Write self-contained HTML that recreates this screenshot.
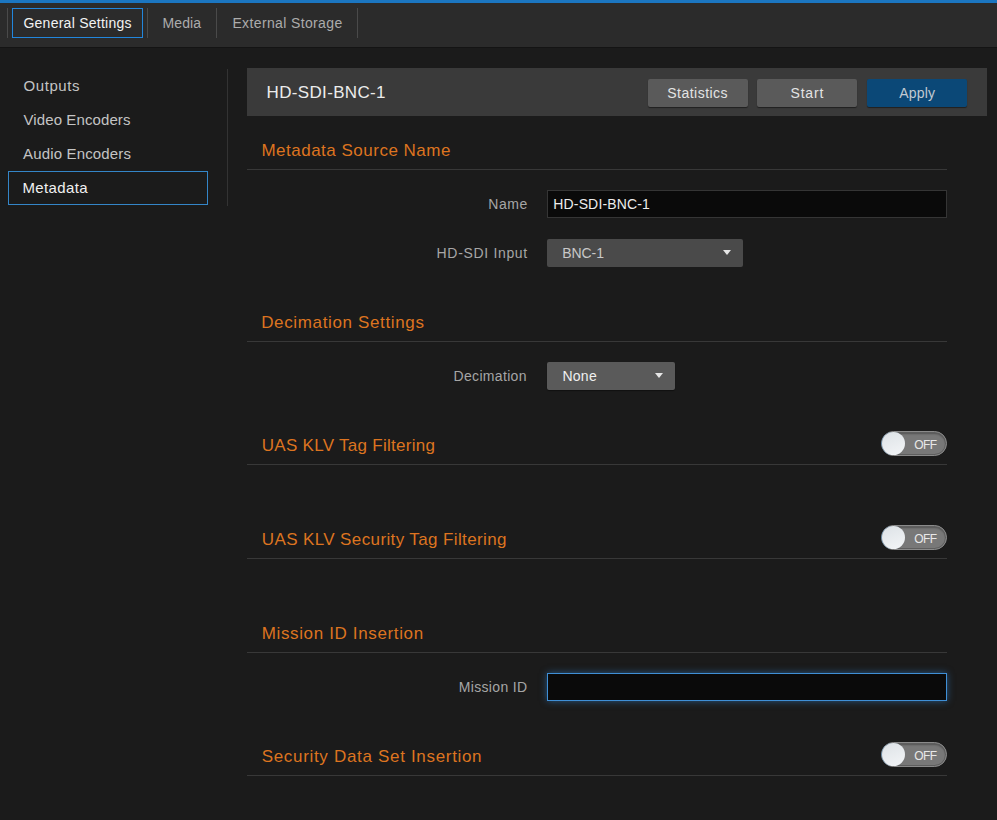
<!DOCTYPE html>
<html><head><meta charset="utf-8">
<style>
*{box-sizing:border-box;margin:0;padding:0}
html,body{width:997px;height:820px;overflow:hidden;background:#1b1b1b;font-family:"Liberation Sans",sans-serif}
.t{position:absolute;white-space:nowrap}
.b{position:absolute}
.vd{position:absolute;width:1px;background:#4a4a4a}
.btn{position:absolute;top:79px;width:100px;height:28px;background:#5a5a5a;border-radius:2px;box-shadow:0 1px 1px rgba(0,0,0,.45)}
.ln{position:absolute;left:247px;width:700px;height:1px;background:#383838}
.inp{position:absolute;left:547px;width:400px;height:28px;background:#0a0a0a;border:1px solid #353535}
.sel{position:absolute;left:547px;height:28px;border-radius:2px}
.caret{position:absolute;width:0;height:0;border-left:4.5px solid transparent;border-right:4.5px solid transparent;border-top:5px solid #e6e6e6}
.tog{position:absolute;left:881px;width:66px;height:25px;border-radius:12.5px;background:#787878;border:1px solid #8a8a8a;box-shadow:inset 0 0 0 1px #5e5e5e,inset 0 2px 2px rgba(0,0,0,.3)}
.knob{position:absolute;left:0px;top:0px;width:23px;height:23px;border-radius:50%;background:linear-gradient(160deg,#dde2e6,#f3f5f7);box-shadow:-0.6px 0 0 0 #5b8fb8}
</style></head><body>
<div class="b" style="left:0;top:0;width:997px;height:3px;background:#1b76c1"></div>
<div class="b" style="left:0;top:3px;width:997px;height:44px;background:#2b2b2b"></div>
<div class="vd" style="left:7px;top:8px;height:30px"></div>
<div class="b" style="left:12px;top:8px;width:131px;height:30px;border:1px solid #2286dc"></div>
<div class="vd" style="left:147px;top:8px;height:30px"></div>
<div class="vd" style="left:216px;top:8px;height:30px"></div>
<div class="vd" style="left:357px;top:8px;height:30px"></div>
<div class="b" style="left:0;top:47px;width:997px;height:1px;background:#141414"></div>

<div class="t" style="left:23.4px;top:16px;font-size:14px;line-height:14px;letter-spacing:0.26px;color:#f2f2f2;">General Settings</div>
<div class="t" style="left:162.4px;top:16px;font-size:14px;line-height:14px;letter-spacing:0.15px;color:#acacac;">Media</div>
<div class="t" style="left:232.4px;top:16px;font-size:14px;line-height:14px;letter-spacing:0.37px;color:#acacac;">External Storage</div>
<div class="b" style="left:8px;top:171px;width:200px;height:34px;border:1px solid #3486c8"></div>
<div class="vd" style="left:227px;top:69px;height:137px;background:#333"></div>
<div class="t" style="left:23.5px;top:78px;font-size:15px;line-height:15px;letter-spacing:0.57px;color:#c4c4c4;">Outputs</div>
<div class="t" style="left:23.5px;top:112px;font-size:15px;line-height:15px;letter-spacing:0.10px;color:#c4c4c4;">Video Encoders</div>
<div class="t" style="left:23.1px;top:146px;font-size:15px;line-height:15px;letter-spacing:0.15px;color:#c4c4c4;">Audio Encoders</div>
<div class="t" style="left:22.5px;top:180px;font-size:15px;line-height:15px;letter-spacing:0.36px;color:#f0f0f0;">Metadata</div>
<div class="b" style="left:247px;top:68px;width:740px;height:48px;background:#3a3a3a"></div>
<div class="t" style="left:266.6px;top:84px;font-size:17px;line-height:17px;letter-spacing:0.34px;color:#ececec;">HD-SDI-BNC-1</div>
<div class="btn" style="left:648px"></div><div class="btn" style="left:757px"></div><div class="btn" style="left:867px;background:#0b4877"></div>
<div class="t" style="left:667.3px;top:86px;font-size:14px;line-height:14px;letter-spacing:0.47px;color:#e4e4e4;">Statistics</div>
<div class="t" style="left:790.5px;top:86px;font-size:14px;line-height:14px;letter-spacing:0.82px;color:#e4e4e4;">Start</div>
<div class="t" style="left:899.3px;top:86px;font-size:14px;line-height:14px;letter-spacing:0.18px;color:#c2cad2;">Apply</div>
<div class="t" style="left:261.4px;top:142px;font-size:17px;line-height:17px;letter-spacing:0.50px;color:#dd7420;">Metadata Source Name</div>
<div class="ln" style="top:169px"></div>
<div class="t" style="left:488.2px;top:197px;font-size:14px;line-height:14px;letter-spacing:0.60px;color:#a6a6a6;">Name</div>
<div class="inp" style="top:190px"></div>
<div class="t" style="left:553.3px;top:197px;font-size:14px;line-height:14px;letter-spacing:0.15px;color:#ededed;">HD-SDI-BNC-1</div>
<div class="t" style="left:436.6px;top:246px;font-size:14px;line-height:14px;letter-spacing:0.67px;color:#a6a6a6;">HD-SDI Input</div>
<div class="sel" style="top:239px;width:196px;background:#4a4a4a"><div class="caret" style="left:176px;top:11px"></div></div>
<div class="t" style="left:562.2px;top:246px;font-size:14px;line-height:14px;letter-spacing:-0.05px;color:#c8c8c8;">BNC-1</div>
<div class="t" style="left:261.2px;top:314px;font-size:17px;line-height:17px;letter-spacing:0.64px;color:#dd7420;">Decimation Settings</div>
<div class="ln" style="top:341px"></div>
<div class="t" style="left:453.5px;top:369px;font-size:14px;line-height:14px;letter-spacing:0.33px;color:#a6a6a6;">Decimation</div>
<div class="sel" style="top:362px;width:128px;background:#5a5a5a;box-shadow:0 1px 1px rgba(0,0,0,.4)"><div class="caret" style="left:108px;top:11px"></div></div>
<div class="t" style="left:562.4px;top:369px;font-size:14px;line-height:14px;letter-spacing:0.27px;color:#f0f0f0;">None</div>
<div class="t" style="left:261.8px;top:437px;font-size:17px;line-height:17px;letter-spacing:0.28px;color:#dd7420;">UAS KLV Tag Filtering</div>
<div class="ln" style="top:464px"></div>
<div class="tog" style="top:431px"><div class="knob"></div></div>
<div class="t" style="left:914.3px;top:439px;font-size:12px;line-height:12px;letter-spacing:-0.55px;color:#e8e8e8;">OFF</div>
<div class="t" style="left:261.8px;top:531px;font-size:17px;line-height:17px;letter-spacing:0.38px;color:#dd7420;">UAS KLV Security Tag Filtering</div>
<div class="ln" style="top:558px"></div>
<div class="tog" style="top:525px"><div class="knob"></div></div>
<div class="t" style="left:914.3px;top:533px;font-size:12px;line-height:12px;letter-spacing:-0.55px;color:#e8e8e8;">OFF</div>
<div class="t" style="left:261.7px;top:625px;font-size:17px;line-height:17px;letter-spacing:0.64px;color:#dd7420;">Mission ID Insertion</div>
<div class="ln" style="top:652px"></div>
<div class="t" style="left:458.8px;top:680px;font-size:14px;line-height:14px;letter-spacing:0.32px;color:#a6a6a6;">Mission ID</div>
<div class="inp" style="top:673px;border-color:#3f8fd6;box-shadow:0 0 7px rgba(50,135,215,.55)"></div>
<div class="t" style="left:261.7px;top:748px;font-size:17px;line-height:17px;letter-spacing:0.68px;color:#dd7420;">Security Data Set Insertion</div>
<div class="ln" style="top:775px"></div>
<div class="tog" style="top:742px"><div class="knob"></div></div>
<div class="t" style="left:914.3px;top:750px;font-size:12px;line-height:12px;letter-spacing:-0.55px;color:#e8e8e8;">OFF</div>
</body></html>
